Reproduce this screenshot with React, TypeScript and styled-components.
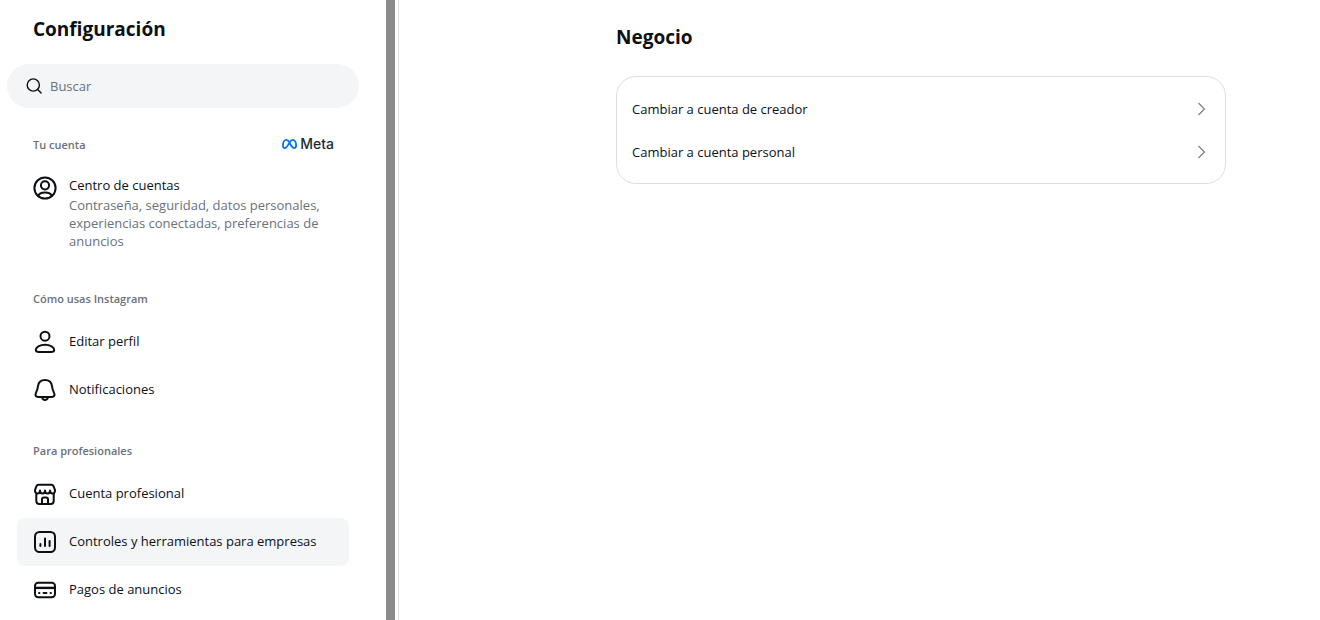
import React from "react";
import styled, { createGlobalStyle } from "styled-components";

const GlobalStyle = createGlobalStyle`
  * { box-sizing: border-box; }
  body {
    margin: 0;
    background: #ffffff;
    color: #0c1014;
    font-family: "Segoe UI", "Open Sans", "Noto Sans", sans-serif;
    font-size: 13px;
    line-height: 18px;
  }
  h1, h2, h3, p, ul { margin: 0; padding: 0; }
  ul { list-style: none; }
  a { color: inherit; text-decoration: none; }
`;

const Page = styled.div`
  display: flex;
  height: 100vh;
  overflow: hidden;
`;

const Sidebar = styled.aside`
  flex: 0 0 399px;
  display: flex;
  gap: 3px;
  justify-content: space-between;
  border-right: 1px solid #dbdfe4;
`;

const SidebarContent = styled.div`
  flex: 1;
  padding: 16px 24px 0 7px;
`;

const ScrollTrack = styled.div`
  flex: 0 0 9px;
  margin-right: 3px;
  background: #8b8b8b;
`;

const Title = styled.h1`
  padding-left: 26px;
  font-size: 19px;
  line-height: 26px;
  font-weight: 700;
`;

const SearchBox = styled.label`
  display: flex;
  align-items: center;
  gap: 7px;
  height: 44px;
  margin-top: 22px;
  padding: 0 19px;
  border-radius: 22px;
  background: #f3f5f7;
`;

const SearchInput = styled.input`
  flex: 1;
  min-width: 0;
  padding: 0;
  border: 0;
  outline: 0;
  background: transparent;
  font: inherit;
  color: inherit;
  &::placeholder { color: #6a717a; opacity: 1; }
`;

const Section = styled.section`
  padding: 29px 10px 0;
`;

const SectionHeader = styled.div`
  display: flex;
  align-items: center;
  justify-content: space-between;
  height: 16px;
  margin-bottom: 11px;
  padding: 0 15px 0 16px;
`;

const SectionTitle = styled.h2`
  font-size: 11px;
  line-height: 16px;
  font-weight: 600;
  color: #6a717a;
`;

const MetaBrand = styled.span`
  display: flex;
  align-items: center;
  gap: 3px;
  padding-bottom: 2px;
  font-family: Inter, sans-serif;
  font-size: 14px;
  line-height: 16px;
  font-weight: 500;
  color: #1c2b33;
`;

const NavLink = styled.a<{ $active?: boolean }>`
  display: flex;
  gap: 12px;
  padding: 12px 16px;
  border-radius: 8px;
  background: ${(p) => (p.$active ? "#f3f5f7" : "transparent")};
`;

const NavText = styled.span`
  flex: 1;
  padding-top: 2px;
`;

const AccountText = styled.span`
  flex: 1;
  display: flex;
  flex-direction: column;
  gap: 2px;
`;

const Description = styled.span`
  color: #6a717a;
`;

const Main = styled.main`
  flex: 1;
  min-width: 0;
  padding: 24px 94px 0 217px;
`;

const PageTitle = styled.h2`
  font-size: 19px;
  line-height: 26px;
  font-weight: 700;
`;

const Card = styled.ul`
  margin-top: 26px;
  padding: 10px 0;
  border: 1px solid #dbdfe4;
  border-radius: 20px;
`;

const CardLink = styled.a`
  display: flex;
  align-items: center;
  justify-content: space-between;
  height: 43px;
  padding: 0 19px 0 15px;
`;

const Icon = ({ children }: { children: React.ReactNode }) => (
  <svg width="24" height="24" viewBox="0 0 24 24" fill="none" stroke="#0c1014" strokeWidth="2" strokeLinecap="round" strokeLinejoin="round" aria-hidden="true">
    {children}
  </svg>
);

const AccountIcon = () => (
  <Icon>
    <circle cx="12" cy="12" r="10.6" />
    <circle cx="12" cy="9.3" r="4.1" />
    <path d="M5.3 20c.7-2.3 3.4-3.5 6.7-3.5s6 1.2 6.7 3.5" />
  </Icon>
);

const ProfileIcon = () => (
  <Icon>
    <circle cx="12" cy="6.2" r="4.5" />
    <path d="M12 14.7c-5.300 0-9.200 2.600-9.200 5 0 1.500 1.100 2.300 3.100 2.300h12.200c2 0 3.100-.8 3.100-2.300 0-2.400-3.900-5-9.200-5Z" />
  </Icon>
);

const BellIcon = () => (
  <Icon>
    <path d="M12 2.100c-3.700 0-6.500 2.400-7 6-.3 2.400-.8 4-1.600 5.700-.5 1.100-.9 1.900-.9 2.800 0 1.400.9 2.300 2.400 2.300h14.200c1.500 0 2.400-.9 2.400-2.300 0-.9-.4-1.700-.9-2.800-.8-1.700-1.300-3.300-1.600-5.700-.5-3.600-3.300-6-7-6Z" />
    <path d="M9 19.300c.4 1.700 1.500 2.700 3 2.700s2.600-1 3-2.700" />
  </Icon>
);

const StoreIcon = () => (
  <Icon>
    <path d="M3.300 11.500v7.400c0 1.800 1.200 3 3 3h11.400c1.800 0 3-1.200 3-3v-7.400" />
    <path d="M9 21.900v-4.400c0-1.200.8-2 2-2h2c1.200 0 2 .8 2 2v4.400" />
    <path d="M5.500 2.700h13c1.100 0 1.700.5 2 1.500L22 8.200c.1 2-.9 3.300-2.500 3.300S17 10.300 17 8.600c0 1.700-1 2.900-2.500 2.900S12 10.300 12 8.600c0 1.700-1 2.900-2.500 2.900S7 10.300 7 8.600c0 1.700-1 2.900-2.500 2.900S1.900 10.200 2 8.200l1.500-4c.3-1 .9-1.500 2-1.500Z" />
  </Icon>
);

const ChartIcon = () => (
  <Icon>
    <rect x="2" y="2" width="20" height="20" rx="4.500" />
    <path d="M7.400 14v2M12 8.500V16M16.600 11v5" />
  </Icon>
);

const CardIcon = () => (
  <Icon>
    <rect x="2" y="4.800" width="20" height="14.400" rx="3.200" />
    <path d="M2 9.900h20" strokeWidth="2.400" strokeLinecap="butt" />
    <path d="M6 15h.500M10.500 15h3M17.500 15h.500" strokeWidth="1.900" />
  </Icon>
);

const SearchIcon = () => (
  <svg width="17" height="16" viewBox="0 0 17 16" fill="none" stroke="#0c1014" strokeWidth="1.400" strokeLinecap="round" aria-hidden="true">
    <circle cx="7.300" cy="7" r="6.100" />
    <path d="m11.700 11.500 3.400 3.400" />
  </svg>
);

const MetaIcon = () => (
  <svg width="15" height="10" viewBox="0 0 15 10" fill="none" stroke="#0573ee" strokeWidth="1.800" aria-hidden="true">
    <path d="M7.500 3.200C6.400 1.600 5.500.900 4.300.900 2.400.900.900 3.500.900 6.300c0 1.700.7 2.800 2 2.800 1.400 0 2.200-1.200 3.600-3.700l1-1.800C8.700 1.600 9.700.900 10.800.900c1.900 0 3.300 2.500 3.300 5.400 0 1.700-.7 2.800-2 2.800-1.300 0-2-.8-3.600-3.600Z" />
  </svg>
);

const Chevron = () => (
  <svg width="9" height="14" viewBox="0 0 9 14" fill="none" stroke="#737a82" strokeWidth="1.100" aria-hidden="true">
    <path d="m1.500 1 6 6-6 6" />
  </svg>
);

const NavItem = ({ icon, label, active }: { icon: React.ReactNode; label: string; active?: boolean }) => (
  <li>
    <NavLink href="#" $active={active} aria-current={active ? "page" : undefined}>
      {icon}
      <NavText>{label}</NavText>
    </NavLink>
  </li>
);

export default function App() {
  return (
    <>
      <GlobalStyle />
      <Page>
        <Sidebar>
          <SidebarContent>
            <Title>Configuración</Title>
            <SearchBox>
              <SearchIcon />
              <SearchInput type="text" placeholder="Buscar" aria-label="Buscar" />
            </SearchBox>
            <nav>
              <Section>
                <SectionHeader>
                  <SectionTitle>Tu cuenta</SectionTitle>
                  <MetaBrand>
                    <MetaIcon />
                    Meta
                  </MetaBrand>
                </SectionHeader>
                <NavLink href="#">
                  <AccountIcon />
                  <AccountText>
                    <span>Centro de cuentas</span>
                    <Description>
                      Contraseña, seguridad, datos personales, experiencias conectadas, preferencias de anuncios
                    </Description>
                  </AccountText>
                </NavLink>
              </Section>
              <Section>
                <SectionHeader>
                  <SectionTitle>Cómo usas Instagram</SectionTitle>
                </SectionHeader>
                <ul>
                  <NavItem icon={<ProfileIcon />} label="Editar perfil" />
                  <NavItem icon={<BellIcon />} label="Notificaciones" />
                </ul>
              </Section>
              <Section>
                <SectionHeader>
                  <SectionTitle>Para profesionales</SectionTitle>
                </SectionHeader>
                <ul>
                  <NavItem icon={<StoreIcon />} label="Cuenta profesional" />
                  <NavItem icon={<ChartIcon />} label="Controles y herramientas para empresas" active />
                  <NavItem icon={<CardIcon />} label="Pagos de anuncios" />
                </ul>
              </Section>
            </nav>
          </SidebarContent>
          <ScrollTrack />
        </Sidebar>
        <Main>
          <PageTitle>Negocio</PageTitle>
          <Card>
            <li>
              <CardLink href="#">
                Cambiar a cuenta de creador
                <Chevron />
              </CardLink>
            </li>
            <li>
              <CardLink href="#">
                Cambiar a cuenta personal
                <Chevron />
              </CardLink>
            </li>
          </Card>
        </Main>
      </Page>
    </>
  );
}
